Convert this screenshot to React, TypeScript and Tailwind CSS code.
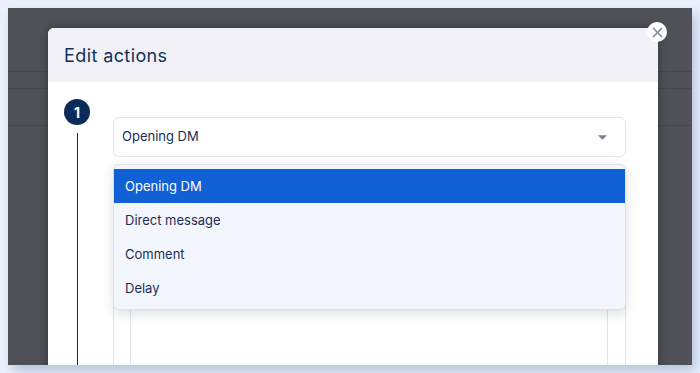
const options = ["Opening DM", "Direct message", "Comment", "Delay"];

export default function App() {
  return (
    <div
      className="w-[700px] h-[373px] bg-[#eaf1fc] p-2 overflow-hidden"
      style={{ fontFamily: "Inter, 'Open Sans', sans-serif" }}
    >
      {/* Dimmed page behind the modal */}
      <div className="relative w-[684px] h-[357px] bg-[#505157] overflow-hidden shadow-[4px_6px_10px_rgba(140,160,195,0.55)]">
        <div className="h-[64px] border-b border-[#46474c]" />
        <div className="h-[17px] border-b border-[#46474c]" />
        <div className="h-[37px] border-b border-[#46474c]" />

        {/* Modal */}
        <div className="absolute left-[40px] top-[20px] w-[610px] h-[400px] bg-white rounded-t-md shadow-[0_0_10px_rgba(0,0,0,0.35)]">
          <button className="absolute -right-[9px] -top-[6px] w-5 h-5 rounded-full bg-white flex items-center justify-center">
            <svg viewBox="0 0 12 12" className="w-[11px] h-[11px]" fill="none" stroke="#8a8ba1" strokeWidth="1.6" strokeLinecap="round">
              <path d="M1.5 1.5l9 9M10.5 1.5l-9 9" />
            </svg>
          </button>

          {/* Header */}
          <div className="h-[54px] bg-[#f1f1f7] rounded-t-md flex items-center px-4">
            <h2 className="text-[18px] text-[#12305c] tracking-[0.4px]">Edit actions</h2>
          </div>

          {/* Body */}
          <div className="flex pl-4 pt-[17px]">
            <div className="w-[26px] flex flex-col items-center">
              <div className="w-[26px] h-[26px] rounded-full bg-[#0c2b5a] text-white text-[14px] font-bold flex items-center justify-center">
                1
              </div>
              <div className="w-px h-[260px] bg-[#0c2b5a] mt-2" />
            </div>

            <div className="relative ml-[23px] mt-[18px] w-[513px]">
              {/* Select */}
              <div className="h-10 rounded-md border border-[#e2e3ec] bg-white flex items-center justify-between pl-[8px] pr-[18px]">
                <span className="text-[13px] text-[#1a2d55]">Opening DM</span>
                <svg viewBox="0 0 10 5" className="w-[9px] h-[5px]" fill="#7c7d94">
                  <path d="M0 0h10L5 5z" />
                </svg>
              </div>

              {/* Content card behind the menu */}
              <div className="mt-[14px] h-[220px] border-x border-t border-[#e2e3ec] rounded-t-md">
                <div className="mx-4 mr-[17px] mt-[20px] h-full border-x border-[#e2e3ec]" />
              </div>

              {/* Open menu */}
              <div className="absolute left-0 right-0 top-[47px] py-1 bg-[#f3f6fc] rounded-md border border-[#e0e2ea] shadow-[0_4px_12px_rgba(20,30,60,0.14)]">
                {options.map((opt, i) => (
                  <div
                    key={opt}
                    className={
                      i === 0
                        ? "h-[34px] flex items-center pl-[11px] pt-px text-[13px] bg-[#1160d6] text-white"
                        : "h-[34px] flex items-center pl-[11px] pt-px text-[13px] text-[#1a2d55]"
                    }
                  >
                    {opt}
                  </div>
                ))}
              </div>
            </div>
          </div>
        </div>
      </div>
    </div>
  );
}
